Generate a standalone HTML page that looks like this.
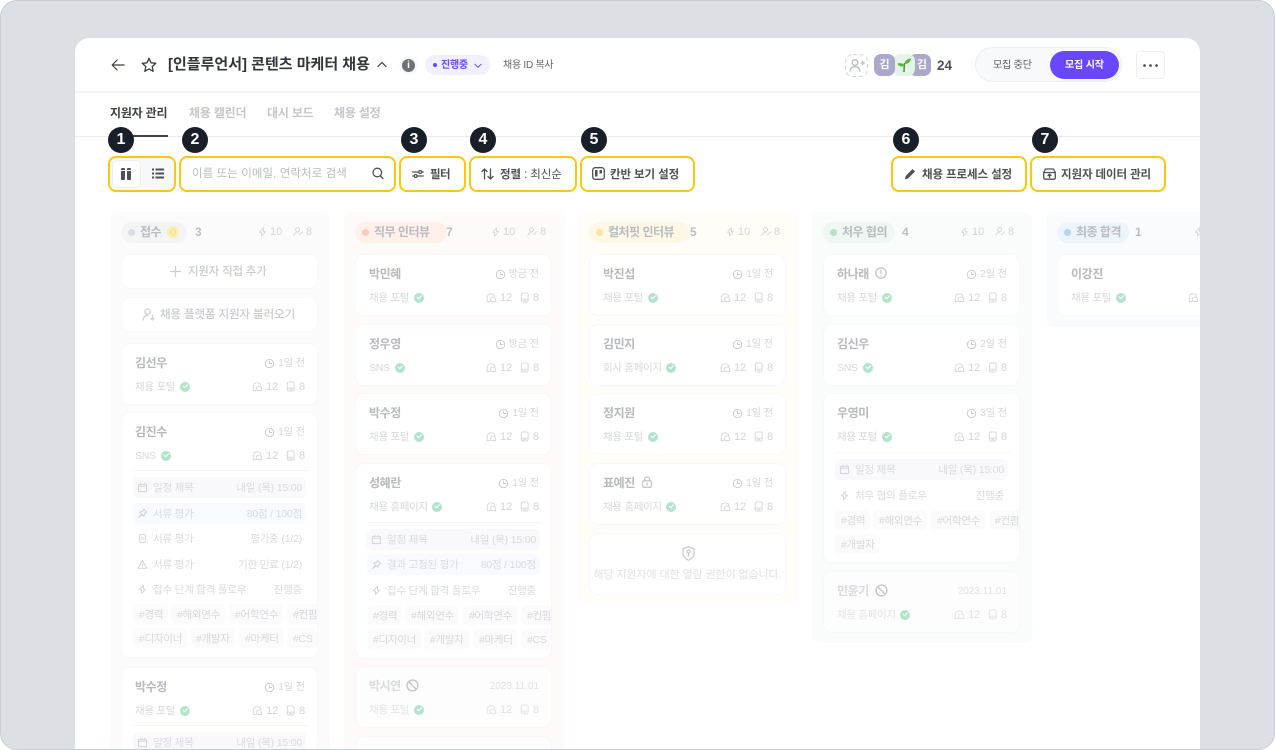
<!DOCTYPE html>
<html lang="ko"><head><meta charset="utf-8"><title>칸반</title>
<style>
*{box-sizing:border-box;margin:0;padding:0}
html,body{width:1275px;height:750px;overflow:hidden;background:#fff}
body{font-family:"Liberation Sans","Noto Sans CJK KR",sans-serif;position:relative}
.a{position:absolute;white-space:nowrap}
#o{position:absolute;left:0;top:0;width:1275px;height:750px;background:#dcdfe4;border:1px solid #c8ccd4;border-radius:17px;overflow:hidden}
#p{position:absolute;left:74px;top:37px;width:1125px;height:720px;background:#fff;border-radius:14px 14px 0 0;overflow:hidden}
#s{position:absolute;left:-1px;top:-1px;width:1275px;height:750px}
svg{display:block;overflow:visible}
.ic{fill:none;stroke:currentColor;stroke-width:var(--sw,1.3);stroke-linecap:round;stroke-linejoin:round}
.st,.tm svg,.d svg,.hs svg{--sw:1}
.tab{position:absolute;top:105px;font-size:12px;letter-spacing:-.2px;line-height:16px;font-weight:700;color:#c4c6cb;white-space:nowrap}
.b{position:absolute;top:127px;width:26px;height:26px;border-radius:50%;background:#191f28;color:#fff;font-weight:700;font-size:16px;line-height:26px;text-align:center}
.y{position:absolute;top:156px;height:36px;border:2px solid #ffc60a;border-radius:8px;background:#fff}
.bt{position:absolute;top:166px;font-size:11.5px;font-weight:700;line-height:18px;letter-spacing:-.1px;color:#4e5159;white-space:nowrap}
.col{position:absolute;top:212px;width:220px;border-radius:8px}
.pill{position:absolute;left:11px;top:10px;height:21px;border-radius:11px}
.dot{position:absolute;left:7px;top:7px;width:7px;height:7px;border-radius:50%}
.pl{position:absolute;left:19px;top:0;font-size:12px;font-weight:700;line-height:21px;letter-spacing:-.5px;color:#b9bbc0;white-space:nowrap}
.cnt{position:absolute;top:12px;font-size:12px;font-weight:700;line-height:17px;color:#bcbec3}
.hs{position:absolute;top:13px;font-size:11px;line-height:15px;color:#d3d5d9;height:15px;white-space:nowrap}
.hs svg{position:absolute;top:1px;left:0;color:#d3d5d9}
.c{position:absolute;left:11px;width:197px;background:#fff;border:1px solid #f7f8f9;border-radius:9px;overflow:hidden}
.c.f{background:#fdfdfd}
.n{position:absolute;left:13px;top:11px;font-size:12px;font-weight:700;line-height:17px;letter-spacing:-.4px;color:#b7b9be;white-space:nowrap}
.f .n{color:#d9dadd}
.nx{position:absolute;top:12px;color:#c4c6ca}
.tm{position:absolute;right:12px;top:12px;font-size:10px;line-height:15px;color:#d3d5d9;white-space:nowrap}
.tm svg{position:absolute;left:-14px;top:2px;color:#c8cacf}
.f .tm{color:#e0e1e4}
.sr{position:absolute;left:13px;top:36px;font-size:10.5px;line-height:15px;letter-spacing:-.3px;color:#d6d8dc;white-space:nowrap}
.f .sr{color:#e2e3e6}
.ck{position:absolute;top:38px;width:10px;height:10px;border-radius:50%;background:#b4e3cb}
.ck:after{content:"";position:absolute;left:3px;top:2.4px;width:4px;height:2.4px;border-left:1.2px solid #fff;border-bottom:1.2px solid #fff;transform:rotate(-45deg)}
.st{position:absolute;top:36px;font-size:11px;line-height:15px;color:#d3d5d9}
.st.i{top:37px;color:#d3d5d9}
.f .st{color:#e0e1e4}
.hr{position:absolute;left:11px;width:175px;height:1px;background:#f6f6f8}
.d{position:absolute;left:11px;width:173px;height:21px;border-radius:5px;font-size:10.5px;line-height:23px;color:#d8dade;white-space:nowrap}
.d.u{background:#f9f9fd}.d.v{background:#f7fafe}
.d svg{position:absolute;left:4px;top:5px;color:#cfd1d6}
.d .l{position:absolute;left:20px;letter-spacing:-.2px}
.d .r{position:absolute;right:4px;letter-spacing:-.2px}
.g{position:absolute;height:20px;background:#fbfbfc;border-radius:5px;font-size:10.5px;line-height:22px;color:#d6d8db;padding-left:6px;white-space:nowrap;letter-spacing:-.3px}
</style></head><body>
<svg width="0" height="0" style="position:absolute">
<defs>
<symbol id="bolt" viewBox="0 0 12 12"><path class="ic" d="M7 1.500 2.800 6.200l2.200.6L5 10.500l4.200-4.700-2.200-.6z"/></symbol>
<symbol id="pc" viewBox="0 0 12 12"><circle class="ic" cx="5" cy="3.400" r="2.200"/><path class="ic" d="M1 10c.3-2.300 2-3.400 4-3.400M7 9l3.600-3.200"/></symbol>
<symbol id="clk" viewBox="0 0 12 12"><circle class="ic" cx="6" cy="6" r="4.600"/><path class="ic" d="M6 3.400V6h2.400"/></symbol>
<symbol id="chat" viewBox="0 0 12 12"><path class="ic" d="M4.200 10.500H1.300V6a4 4 0 0 1 4-4h.6a4 4 0 0 1 3.800 3"/><path class="ic" d="M4.600 8.500a3 3 0 0 1 3-3 3 3 0 0 1 3 3v2H7.500a3 3 0 0 1-2.900-2z"/></symbol>
<symbol id="doc" viewBox="0 0 12 12"><rect class="ic" x="2.500" y="1" width="7.500" height="10" rx="1.800"/><path class="ic" d="M2.500 7.800h7.500M5.300 9.400h2"/></symbol>
<symbol id="cal" viewBox="0 0 12 12"><rect class="ic" x="1.500" y="2.500" width="9" height="8" rx="1"/><path class="ic" d="M1.500 4.600h9M4 1.200v1.500M8 1.200v1.500"/></symbol>
<symbol id="pin" viewBox="0 0 12 12"><path class="ic" d="M7.200 1.300 10.700 4.800 8.500 5.600 7.500 9 5.500 7 1.500 10.500 5 6.500 3 4.500 6.400 3.500z"/></symbol>
<symbol id="fl" viewBox="0 0 12 12"><rect class="ic" x="2.500" y="1.500" width="7" height="9" rx="2"/><path class="ic" d="M4.500 5h3M4.500 7.300h3"/></symbol>
<symbol id="tri" viewBox="0 0 12 12"><path class="ic" d="M6 1.800 10.800 10.200H1.200zM6 5v2.500M6 8.800v.1"/></symbol>
<symbol id="ban" viewBox="0 0 12 12"><circle class="ic" cx="6" cy="6" r="5"/><path class="ic" d="M2.600 2.600l6.800 6.800"/></symbol>
</defs></svg>
<div id="o"><div id="p"></div>
<div id="s">
<!-- header -->
<svg class="a" style="left:111px;top:58px;color:#3a3d44" width="14" height="14" viewBox="0 0 16 16"><path class="ic" d="M15 8H1.500M7 2.300 1.300 8 7 13.700"/></svg>
<svg class="a" style="left:141px;top:57px;color:#3a3d44" width="16" height="16" viewBox="0 0 16 16"><path class="ic" d="M8 1.300l2 4.500 4.800.5-3.600 3.200 1 4.800L8 11.900l-4.200 2.400 1-4.800L1.200 6.300 6 5.800z"/></svg>
<div class="a" style="left:168px;top:54px;font-size:15px;font-weight:700;line-height:21px;letter-spacing:0;color:#33363c">[인플루언서] 콘텐츠 마케터 채용</div>
<svg class="a" style="left:377px;top:61px;color:#4e5159" width="10" height="7" viewBox="0 0 10 7"><path class="ic" d="M1 5.500 5 1.500l4 4"/></svg>
<div class="a" style="left:399px;top:56px;width:19px;height:19px;border-radius:50%;background:#f7f8fa"></div>
<div class="a" style="left:402px;top:59px;width:13px;height:13px;border-radius:50%;background:#6e7179;color:#fff;font-size:10px;font-weight:700;line-height:13px;text-align:center">i</div>
<div class="a" style="left:425px;top:55px;width:65px;height:20px;border-radius:10px;background:#f2efff"></div>
<div class="a" style="left:433px;top:63px;width:4px;height:4px;border-radius:50%;background:#6847ff"></div>
<div class="a" style="left:441px;top:58px;font-size:10px;font-weight:700;line-height:16px;letter-spacing:-.25px;color:#6847ff">진행중</div>
<svg class="a" style="left:474px;top:63px;color:#6847ff" width="8" height="5.500" viewBox="0 0 10 7"><path class="ic" d="M1 1.500 5 5.500l4-4"/></svg>
<div class="a" style="left:503px;top:58px;font-size:10px;line-height:16px;letter-spacing:-.25px;color:#63666d">채용 ID 복사</div>

<svg class="a" style="left:845px;top:54px;color:#b9bcc3" width="23" height="23" viewBox="0 0 23 23"><rect x=".6" y=".6" width="21.800" height="21.800" rx="7" fill="none" stroke="#cfd2d8" stroke-dasharray="4 3"/><circle class="ic" cx="10" cy="8.500" r="2.800"/><path class="ic" d="M5 17c.3-3 2.400-4.300 5-4.300s4.700 1.300 5 4.300M16 9h3.500M17.700 7.200v3.500"/></svg>
<div class="a" style="left:909px;top:54px;width:22px;height:22px;border-radius:7px;background:#a9a9cb;color:#fff;font-size:11px;font-weight:700;line-height:22px;text-align:right;padding-right:4px">김</div>
<div class="a" style="left:893px;top:54px;width:22px;height:22px;border-radius:7px;background:#e3f3e8"></div>
<svg class="a" style="left:896px;top:57px" width="16" height="16" viewBox="0 0 16 16"><path d="M8 15C8 11 8.500 8 8.500 6" fill="none" stroke="#4e9e2f" stroke-width="1.600"/><path d="M8.500 7C9 3.500 11.500 1.500 15 1.500 14.500 5 12 7 8.500 7z" fill="#5fb13a"/><path d="M8.200 9C7.500 6.500 5 5.500 1.500 6.500 2.500 9.500 5 10 8.200 9z" fill="#5fb13a"/></svg>
<div class="a" style="left:874px;top:54px;width:21px;height:22px;border-radius:7px;background:#a9a9cb;color:#fff;font-size:11px;font-weight:700;line-height:22px;text-align:center">김</div>
<div class="a" style="left:937px;top:57px;font-size:13.500px;font-weight:700;line-height:18px;color:#4e5159">24</div>
<div class="a" style="left:975px;top:47px;width:147px;height:35px;border-radius:18px;background:#f8f9fb;border:1px solid #eceef2"></div>
<div class="a" style="left:1050px;top:51px;width:69px;height:28px;border-radius:14px;background:#6847ff"></div>
<div class="a" style="left:993px;top:58px;font-size:10px;line-height:16px;letter-spacing:-.15px;color:#55585f">모집 중단</div>
<div class="a" style="left:1065px;top:58px;font-size:10px;font-weight:700;line-height:16px;letter-spacing:-.15px;color:#fff">모집 시작</div>
<div class="a" style="left:1136px;top:51px;width:29px;height:28px;border-radius:4px;border:1px solid #eceef2"></div>
<svg class="a" style="left:1143px;top:64px" width="15" height="3" viewBox="0 0 15 3"><circle cx="1.500" cy="1.500" r="1.300" fill="#3a3d44"/><circle cx="7.500" cy="1.500" r="1.300" fill="#3a3d44"/><circle cx="13.500" cy="1.500" r="1.300" fill="#3a3d44"/></svg>
<div class="a" style="left:75px;top:91px;width:1125px;height:2px;background:#f4f5f7"></div>
<!-- tabs -->
<div class="tab" style="left:110px;color:#3f4248">지원자 관리</div>
<div class="tab" style="left:189px">채용 캘린더</div>
<div class="tab" style="left:267px">대시 보드</div>
<div class="tab" style="left:334px">채용 설정</div>
<div class="a" style="left:75px;top:136px;width:1125px;height:1px;background:#e9ebee"></div>
<div class="a" style="left:110px;top:135px;width:58px;height:2px;background:#3f4248"></div>
<!-- toolbar -->
<div class="y" style="left:108px;width:68px;background:#f7f8fa"></div>
<div class="a" style="left:112px;top:160px;width:29px;height:28px;border-radius:5px;background:#fff;border:1px solid #eceef2"></div>
<svg class="a" style="left:121px;top:168px" width="11" height="12" viewBox="0 0 11 12"><rect x="0" y="0" width="4" height="12" rx="1" fill="#4e5159"/><rect x="6" y="0" width="4" height="12" rx="1" fill="#4e5159"/><path d="M0 2.500h10" stroke="#fff"/></svg>
<svg class="a" style="left:152px;top:168px;color:#4e5159" width="12" height="11" viewBox="0 0 12 11"><path d="M3.500 1.500H12M3.500 5.500H12M3.500 9.500H12M0 1.500h2M0 5.500h2M0 9.500h2" fill="none" stroke="currentColor" stroke-width="2"/></svg>
<div class="y" style="left:179px;width:217px"></div>
<div class="a" style="left:192px;top:166px;font-size:11.500px;line-height:17px;letter-spacing:.08px;color:#b9bbc1">이름 또는 이메일, 연락처로 검색</div>
<svg class="a" style="left:372px;top:167px;color:#4e5159" width="12" height="13" viewBox="0 0 12 13"><circle class="ic" cx="5.300" cy="5.500" r="4.300"/><path class="ic" d="M8.500 9 11 11.700"/></svg>
<div class="y" style="left:399px;width:67px"></div>
<svg class="a" style="left:412px;top:169px;color:#4e5159" width="12" height="10" viewBox="0 0 12 10"><path class="ic" d="M.7 3H6.500M10 3h1.300M.7 7H2M5.500 7h5.800"/><circle class="ic" cx="8.200" cy="3" r="1.500"/><circle class="ic" cx="3.700" cy="7" r="1.500"/></svg>
<div class="bt" style="left:430px;letter-spacing:-.6px">필터</div>
<div class="y" style="left:469px;width:108px"></div>
<svg class="a" style="left:481px;top:168px;color:#4e5159" width="13" height="12" viewBox="0 0 13 12"><path class="ic" d="M3.500 11V1M1 3.500 3.500 1 6 3.500M9.500 1v10M7 8.500 9.500 11 12 8.500"/></svg>
<div class="bt" style="left:500px">정렬<span style="font-weight:400"> : 최신순</span></div>
<div class="y" style="left:580px;width:115px"></div>
<svg class="a" style="left:592px;top:167px;color:#4e5159" width="13" height="13" viewBox="0 0 13 13"><rect class="ic" x=".7" y=".7" width="11.600" height="11.600" rx="2.500"/><rect x="3" y="3" width="2.500" height="6.500" fill="#4e5159"/><rect x="7.500" y="3" width="2.500" height="3.500" fill="#4e5159"/></svg>
<div class="bt" style="left:610px">칸반 보기 설정</div>
<div class="y" style="left:891px;width:136px"></div>
<svg class="a" style="left:904px;top:168px" width="12" height="12" viewBox="0 0 12 12"><path d="M8.500 1 11 3.500 4 10.500 1 11.200 1.700 8z" fill="#4e5159"/></svg>
<div class="bt" style="left:922px">채용 프로세스 설정</div>
<div class="y" style="left:1030px;width:136px"></div>
<svg class="a" style="left:1043px;top:168px;color:#4e5159" width="13" height="12" viewBox="0 0 13 12"><path class="ic" d="M.7 4.500 2.500 1h8l1.800 3.500v5.300c0 .8-.6 1.400-1.400 1.400H2.100C1.300 11.200.7 10.600.7 9.800zM.7 4.500h11.600M6.500 9.500V6.200M5 7.500l1.500-1.400L8 7.500"/></svg>
<div class="bt" style="left:1061px">지원자 데이터 관리</div>
<div class="b" style="left:108px">1</div><div class="b" style="left:182px">2</div><div class="b" style="left:401px">3</div><div class="b" style="left:470px">4</div><div class="b" style="left:581px">5</div><div class="b" style="left:893px">6</div><div class="b" style="left:1032px">7</div>

<!-- column 1 -->
<div class="col" style="left:110px;height:560px;background:#fbfbfc">
<div class="pill" style="width:66px;background:#f3f4f6"><span class="dot" style="background:#d9dbe3"></span><span class="pl">접수</span></div>
<div class="a" style="left:57px;top:14px;width:12px;height:12px;border-radius:50%;background:#fbedb0"></div>
<div class="a" style="left:60px;top:17px;width:6px;height:6px;border-radius:50%;border:1px solid #f7e08c"></div>
<div class="cnt" style="left:85px">3</div>
<div class="hs" style="left:147px;padding-left:13px"><svg width="11" height="12"><use href="#bolt"/></svg>10</div>
<div class="hs" style="left:183px;padding-left:13px"><svg width="11" height="12"><use href="#pc"/></svg>8</div>
<div class="c" style="top:42px;height:35px"><svg class="a" style="left:48px;top:11px;color:#ccced3" width="11" height="11" viewBox="0 0 11 11"><path class="ic" d="M5.500 .5v10M.5 5.500h10"/></svg><div class="a" style="left:66px;top:9px;font-size:11.500px;font-weight:500;line-height:16px;letter-spacing:-.2px;color:#c9cbd0">지원자 직접 추가</div></div>
<div class="c" style="top:85px;height:35px"><svg class="a" style="left:20px;top:10px;color:#cfd1d6" width="13" height="13" viewBox="0 0 13 13"><circle class="ic" cx="5.500" cy="3.700" r="2.700"/><path class="ic" d="M1 12c.3-3 2.200-4.300 4.500-4.300M10.500 7v5M8.800 10.300l1.700 1.700 1.700-1.700"/></svg><div class="a" style="left:38px;top:9px;font-size:11.500px;font-weight:500;line-height:16px;letter-spacing:-.1px;color:#c9cbd0">채용 플랫폼 지원자 불러오기</div></div>

<div class="c" style="top:131px;height:62px"><div class="n">김선우</div><div class="tm"><svg width="11" height="11"><use href="#clk"/></svg>1일 전</div><div class="sr">채용 포털</div><span class="ck" style="left:58px"></span>
<svg class="st i" style="left:130px" width="11" height="11"><use href="#chat"/></svg><div class="st" style="left:144px">12</div><svg class="st i" style="left:163px" width="11" height="11"><use href="#doc"/></svg><div class="st" style="left:177px">8</div></div>

<div class="c" style="top:200px;height:246px"><div class="n">김진수</div><div class="tm"><svg width="11" height="11"><use href="#clk"/></svg>1일 전</div><div class="sr">SNS</div><span class="ck" style="left:39px"></span>
<svg class="st i" style="left:130px" width="11" height="11"><use href="#chat"/></svg><div class="st" style="left:144px">12</div><svg class="st i" style="left:163px" width="11" height="11"><use href="#doc"/></svg><div class="st" style="left:177px">8</div>
<div class="hr" style="top:57px"></div>
<div class="d u" style="top:64px"><svg width="11" height="11"><use href="#cal"/></svg><span class="l">일정 제목</span><span class="r">내일 (목) 15:00</span></div>
<div class="d v" style="top:89.500px"><svg width="11" height="11"><use href="#pin"/></svg><span class="l">서류 평가</span><span class="r">80점 / 100점</span></div>
<div class="d" style="top:115px"><svg width="11" height="11"><use href="#fl"/></svg><span class="l">서류 평가</span><span class="r">평가중 (1/2)</span></div>
<div class="d" style="top:140.500px"><svg width="11" height="11"><use href="#tri"/></svg><span class="l">서류 평가</span><span class="r">기한 만료 (1/2)</span></div>
<div class="d" style="top:165.500px"><svg width="11" height="11"><use href="#bolt"/></svg><span class="l">접수 단계 합격 플로우</span><span class="r">진행중</span></div>
<div class="g" style="left:11px;top:191px;width:35px">#경력</div><div class="g" style="left:49px;top:191px;width:54px">#해외연수</div><div class="g" style="left:107px;top:191px;width:54px">#어학연수</div><div class="g" style="left:165px;top:191px;width:40px">#컨펌</div>
<div class="g" style="left:11px;top:215px;width:54px">#디자이너</div><div class="g" style="left:68px;top:215px;width:45px">#개발자</div><div class="g" style="left:117px;top:215px;width:45px">#마케터</div><div class="g" style="left:165px;top:215px;width:31px">#CS</div>
</div>

<div class="c" style="top:455px;height:120px"><div class="n">박수정</div><div class="tm"><svg width="11" height="11"><use href="#clk"/></svg>1일 전</div><div class="sr">채용 포털</div><span class="ck" style="left:58px"></span>
<svg class="st i" style="left:130px" width="11" height="11"><use href="#chat"/></svg><div class="st" style="left:144px">12</div><svg class="st i" style="left:163px" width="11" height="11"><use href="#doc"/></svg><div class="st" style="left:177px">8</div>
<div class="hr" style="top:57px"></div>
<div class="d u" style="top:64px"><svg width="11" height="11"><use href="#cal"/></svg><span class="l">일정 제목</span><span class="r">내일 (목) 15:00</span></div></div>
</div>

<!-- column 2 -->
<div class="col" style="left:344px;height:560px;background:#fffafa">
<div class="pill" style="width:92px;background:#fff0ec"><span class="dot" style="background:#f9cbbd"></span><span class="pl">직무 인터뷰</span></div>
<div class="cnt" style="left:102px">7</div>
<div class="hs" style="left:146px;padding-left:13px"><svg width="11" height="12"><use href="#bolt"/></svg>10</div>
<div class="hs" style="left:183px;padding-left:13px"><svg width="11" height="12"><use href="#pc"/></svg>8</div>

<div class="c" style="top:42px;height:62px"><div class="n">박민혜</div><div class="tm"><svg width="11" height="11"><use href="#clk"/></svg>방금 전</div><div class="sr">채용 포털</div><span class="ck" style="left:58px"></span>
<svg class="st i" style="left:130px" width="11" height="11"><use href="#chat"/></svg><div class="st" style="left:144px">12</div><svg class="st i" style="left:163px" width="11" height="11"><use href="#doc"/></svg><div class="st" style="left:177px">8</div></div>
<div class="c" style="top:112px;height:62px"><div class="n">정우영</div><div class="tm"><svg width="11" height="11"><use href="#clk"/></svg>방금 전</div><div class="sr">SNS</div><span class="ck" style="left:39px"></span>
<svg class="st i" style="left:130px" width="11" height="11"><use href="#chat"/></svg><div class="st" style="left:144px">12</div><svg class="st i" style="left:163px" width="11" height="11"><use href="#doc"/></svg><div class="st" style="left:177px">8</div></div>
<div class="c" style="top:181px;height:62px"><div class="n">박수정</div><div class="tm"><svg width="11" height="11"><use href="#clk"/></svg>1일 전</div><div class="sr">채용 포털</div><span class="ck" style="left:58px"></span>
<svg class="st i" style="left:130px" width="11" height="11"><use href="#chat"/></svg><div class="st" style="left:144px">12</div><svg class="st i" style="left:163px" width="11" height="11"><use href="#doc"/></svg><div class="st" style="left:177px">8</div></div>
<div class="c" style="top:251px;height:196px"><div class="n">성혜란</div><div class="tm"><svg width="11" height="11"><use href="#clk"/></svg>1일 전</div><div class="sr">채용 홈페이지</div><span class="ck" style="left:76px"></span>
<svg class="st i" style="left:130px" width="11" height="11"><use href="#chat"/></svg><div class="st" style="left:144px">12</div><svg class="st i" style="left:163px" width="11" height="11"><use href="#doc"/></svg><div class="st" style="left:177px">8</div>
<div class="hr" style="top:58px"></div>
<div class="d u" style="top:65px"><svg width="11" height="11"><use href="#cal"/></svg><span class="l">일정 제목</span><span class="r">내일 (목) 15:00</span></div>
<div class="d v" style="top:90px"><svg width="11" height="11"><use href="#pin"/></svg><span class="l">결과 고정된 평가</span><span class="r">80점 / 100점</span></div>
<div class="d" style="top:116px"><svg width="11" height="11"><use href="#bolt"/></svg><span class="l">접수 단계 합격 플로우</span><span class="r">진행중</span></div>
<div class="g" style="left:11px;top:141px;width:35px">#경력</div><div class="g" style="left:49px;top:141px;width:54px">#해외연수</div><div class="g" style="left:107px;top:141px;width:54px">#어학연수</div><div class="g" style="left:165px;top:141px;width:40px">#컨펌</div>
<div class="g" style="left:11px;top:165px;width:54px">#디자이너</div><div class="g" style="left:68px;top:165px;width:45px">#개발자</div><div class="g" style="left:117px;top:165px;width:45px">#마케터</div><div class="g" style="left:165px;top:165px;width:31px">#CS</div>
</div>
<div class="c f" style="top:454px;height:62px"><div class="n">박시연</div><svg class="nx" style="left:50px" width="13" height="13"><use href="#ban"/></svg><div class="tm">2023.11.01</div><div class="sr">채용 포털</div><span class="ck" style="left:58px"></span>
<svg class="st i" style="left:130px" width="11" height="11"><use href="#chat"/></svg><div class="st" style="left:144px">12</div><svg class="st i" style="left:163px" width="11" height="11"><use href="#doc"/></svg><div class="st" style="left:177px">8</div></div>
<div class="c f" style="top:524px;height:40px"></div>
</div>

<!-- column 3 -->
<div class="col" style="left:578px;height:392px;background:#fffdf7">
<div class="pill" style="width:101px;background:#fdf8e6"><span class="dot" style="background:#fae3a5"></span><span class="pl">컬처핏 인터뷰</span></div>
<div class="cnt" style="left:112px">5</div>
<div class="hs" style="left:147px;padding-left:13px"><svg width="11" height="12"><use href="#bolt"/></svg>10</div>
<div class="hs" style="left:183px;padding-left:13px"><svg width="11" height="12"><use href="#pc"/></svg>8</div>
<div class="c" style="top:42px;height:62px"><div class="n">박진섭</div><div class="tm"><svg width="11" height="11"><use href="#clk"/></svg>1일 전</div><div class="sr">채용 포털</div><span class="ck" style="left:58px"></span>
<svg class="st i" style="left:130px" width="11" height="11"><use href="#chat"/></svg><div class="st" style="left:144px">12</div><svg class="st i" style="left:163px" width="11" height="11"><use href="#doc"/></svg><div class="st" style="left:177px">8</div></div>
<div class="c" style="top:112px;height:62px"><div class="n">김민지</div><div class="tm"><svg width="11" height="11"><use href="#clk"/></svg>1일 전</div><div class="sr">회사 홈페이지</div><span class="ck" style="left:76px"></span>
<svg class="st i" style="left:130px" width="11" height="11"><use href="#chat"/></svg><div class="st" style="left:144px">12</div><svg class="st i" style="left:163px" width="11" height="11"><use href="#doc"/></svg><div class="st" style="left:177px">8</div></div>
<div class="c" style="top:181px;height:62px"><div class="n">정지원</div><div class="tm"><svg width="11" height="11"><use href="#clk"/></svg>1일 전</div><div class="sr">채용 포털</div><span class="ck" style="left:58px"></span>
<svg class="st i" style="left:130px" width="11" height="11"><use href="#chat"/></svg><div class="st" style="left:144px">12</div><svg class="st i" style="left:163px" width="11" height="11"><use href="#doc"/></svg><div class="st" style="left:177px">8</div></div>
<div class="c" style="top:251px;height:62px"><div class="n">표예진</div><svg class="nx" style="left:51px" width="12" height="12" viewBox="0 0 12 12"><rect class="ic" x="1.500" y="4.800" width="9" height="6.500" rx="1.500"/><path class="ic" d="M3.500 4.800V3.500a2.500 2.500 0 0 1 5 0v1.300M6 7v2"/></svg><div class="tm"><svg width="11" height="11"><use href="#clk"/></svg>1일 전</div><div class="sr">채용 홈페이지</div><span class="ck" style="left:76px"></span>
<svg class="st i" style="left:130px" width="11" height="11"><use href="#chat"/></svg><div class="st" style="left:144px">12</div><svg class="st i" style="left:163px" width="11" height="11"><use href="#doc"/></svg><div class="st" style="left:177px">8</div></div>
<div class="c" style="top:321px;height:62px"><svg class="a" style="left:92px;top:12px;color:#c9cbd0" width="13" height="15" viewBox="0 0 13 15"><path class="ic" d="M6.500 .8 12 2.600v5c0 3-2.500 5.200-5.500 6.600C3.500 12.800 1 10.600 1 7.600v-5z"/><circle class="ic" cx="6.500" cy="5.500" r="1.500"/><path class="ic" d="M6.500 7v3"/></svg><div class="a" style="left:0;top:33px;width:195px;text-align:center;font-size:11px;line-height:16px;letter-spacing:-.1px;color:#e0e1e4">해당 지원자에 대한 열람 권한이 없습니다.</div></div>
</div>

<!-- column 4 -->
<div class="col" style="left:812px;height:431px;background:#fafcfb">
<div class="pill" style="width:72px;background:#eef7f1"><span class="dot" style="background:#badfc8"></span><span class="pl">처우 협의</span></div>
<div class="cnt" style="left:90px">4</div>
<div class="hs" style="left:147px;padding-left:13px"><svg width="11" height="12"><use href="#bolt"/></svg>10</div>
<div class="hs" style="left:183px;padding-left:13px"><svg width="11" height="12"><use href="#pc"/></svg>8</div>
<div class="c" style="top:42px;height:62px"><div class="n">하나래</div><svg class="nx" style="left:51px" width="12" height="12" viewBox="0 0 12 12"><circle class="ic" cx="6" cy="6" r="5.200"/><path class="ic" d="M6 3v3.500M6 8.800v.1"/></svg><div class="tm"><svg width="11" height="11"><use href="#clk"/></svg>2일 전</div><div class="sr">채용 포털</div><span class="ck" style="left:58px"></span>
<svg class="st i" style="left:130px" width="11" height="11"><use href="#chat"/></svg><div class="st" style="left:144px">12</div><svg class="st i" style="left:163px" width="11" height="11"><use href="#doc"/></svg><div class="st" style="left:177px">8</div></div>
<div class="c" style="top:112px;height:62px"><div class="n">김신우</div><div class="tm"><svg width="11" height="11"><use href="#clk"/></svg>2일 전</div><div class="sr">SNS</div><span class="ck" style="left:39px"></span>
<svg class="st i" style="left:130px" width="11" height="11"><use href="#chat"/></svg><div class="st" style="left:144px">12</div><svg class="st i" style="left:163px" width="11" height="11"><use href="#doc"/></svg><div class="st" style="left:177px">8</div></div>
<div class="c" style="top:181px;height:170px"><div class="n">우영미</div><div class="tm"><svg width="11" height="11"><use href="#clk"/></svg>3일 전</div><div class="sr">채용 포털</div><span class="ck" style="left:58px"></span>
<svg class="st i" style="left:130px" width="11" height="11"><use href="#chat"/></svg><div class="st" style="left:144px">12</div><svg class="st i" style="left:163px" width="11" height="11"><use href="#doc"/></svg><div class="st" style="left:177px">8</div>
<div class="hr" style="top:58px"></div>
<div class="d u" style="top:65px"><svg width="11" height="11"><use href="#cal"/></svg><span class="l">일정 제목</span><span class="r">내일 (목) 15:00</span></div>
<div class="d" style="top:91px"><svg width="11" height="11"><use href="#bolt"/></svg><span class="l">처우 협의 플로우</span><span class="r">진행중</span></div>
<div class="g" style="left:11px;top:116px;width:35px">#경력</div><div class="g" style="left:49px;top:116px;width:54px">#해외연수</div><div class="g" style="left:107px;top:116px;width:54px">#어학연수</div><div class="g" style="left:165px;top:116px;width:40px">#컨펌</div>
<div class="g" style="left:11px;top:140px;width:45px">#개발자</div>
</div>
<div class="c f" style="top:359px;height:62px"><div class="n">민윤기</div><svg class="nx" style="left:51px" width="13" height="13"><use href="#ban"/></svg><div class="tm">2023.11.01</div><div class="sr">채용 홈페이지</div><span class="ck" style="left:76px"></span>
<svg class="st i" style="left:130px" width="11" height="11"><use href="#chat"/></svg><div class="st" style="left:144px">12</div><svg class="st i" style="left:163px" width="11" height="11"><use href="#doc"/></svg><div class="st" style="left:177px">8</div></div>
</div>

<!-- column 5 (clipped) -->
<div class="a" style="left:1046px;top:212px;width:154px;height:115px;overflow:hidden">
<div class="col" style="left:0;top:0;height:115px;background:#f9fbfe">
<div class="pill" style="width:72px;background:#eef4fb"><span class="dot" style="background:#b6d3f5"></span><span class="pl">최종 합격</span></div>
<div class="cnt" style="left:89px">1</div>
<div class="hs" style="left:147px;padding-left:13px"><svg width="11" height="12"><use href="#bolt"/></svg>10</div>
<div class="c" style="top:42px;height:62px"><div class="n">이강진</div><div class="sr">채용 포털</div><span class="ck" style="left:58px"></span>
<svg class="st i" style="left:130px" width="11" height="11"><use href="#chat"/></svg></div>
</div></div>
</div></div>
</body></html>
